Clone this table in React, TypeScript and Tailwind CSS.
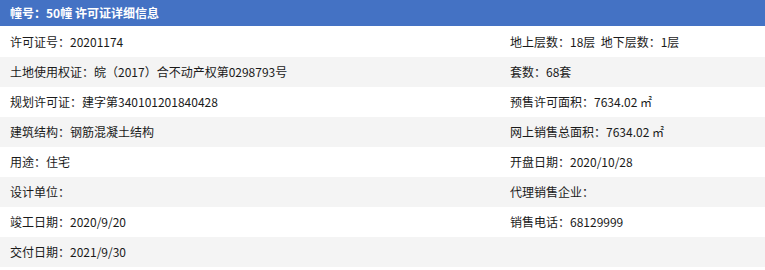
const rows: [string, string][] = [
  ["许可证号：20201174", "地上层数：18层  地下层数：1层"],
  ["土地使用权证：皖（2017）合不动产权第0298793号", "套数：68套"],
  ["规划许可证：建字第340101201840428", "预售许可面积：7634.02 ㎡"],
  ["建筑结构：钢筋混凝土结构", "网上销售总面积：7634.02 ㎡"],
  ["用途：住宅", "开盘日期：2020/10/28"],
  ["设计单位：", "代理销售企业："],
  ["竣工日期：2020/9/20", "销售电话：68129999"],
  ["交付日期：2021/9/30", ""],
];

const App = () => {
  return (
    <div className="w-[765px] h-[270px] bg-white font-['Microsoft_YaHei','Noto_Sans_CJK_SC',sans-serif] text-[12px] text-[#1a1a1a]">
      {/* Title bar */}
      <div className="flex h-[26px] items-center bg-[#4472c4] px-[10px] text-[12px] font-bold text-white">
        幢号：50幢 许可证详细信息
      </div>

      {/* Detail rows, alternating background */}
      <div className="flex flex-col pt-px">
        {rows.map(([left, right], i) => (
          <div
            key={left}
            className={`grid h-[30px] grid-cols-[500px_1fr] items-center ${i % 2 === 1 ? "bg-[#f4f4f4]" : "bg-white"}`}
          >
            <div className="whitespace-pre px-[10px]">{left}</div>
            <div className="whitespace-pre px-[10px]">{right}</div>
          </div>
        ))}
      </div>
    </div>
  );
};

export default App;
